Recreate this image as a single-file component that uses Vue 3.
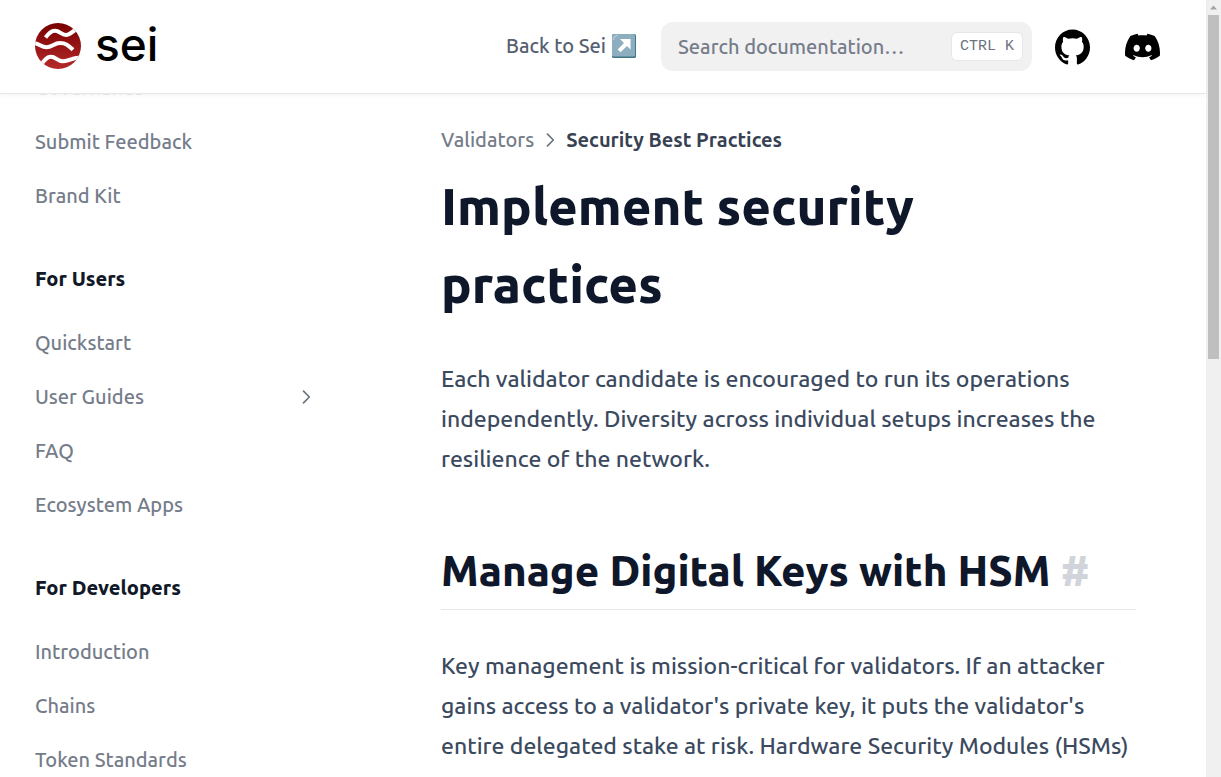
<script setup>
const sections = [
  {
    title: '',
    items: [{ label: 'Governance' }, { label: 'Submit Feedback' }, { label: 'Brand Kit' }],
  },
  {
    title: 'For Users',
    items: [
      { label: 'Quickstart' },
      { label: 'User Guides', expandable: true },
      { label: 'FAQ' },
      { label: 'Ecosystem Apps' },
    ],
  },
  {
    title: 'For Developers',
    items: [{ label: 'Introduction' }, { label: 'Chains' }, { label: 'Token Standards' }],
  },
]
</script>

<template>
  <div class="page">
    <div class="view">
      <header class="navbar">
        <a class="brand" href="#" aria-label="Sei home">
          <svg class="mark" viewBox="0 0 46 46" aria-hidden="true">
            <defs>
              <linearGradient id="seiRed" x1="0" y1="0" x2="0" y2="1">
                <stop offset="0" stop-color="#780000" />
                <stop offset="1" stop-color="#b52a2a" />
              </linearGradient>
              <clipPath id="seiDisc"><circle cx="23" cy="23" r="23" /></clipPath>
            </defs>
            <g clip-path="url(#seiDisc)">
              <rect width="46" height="46" fill="url(#seiRed)" />
              <g fill="none" stroke="#fff" stroke-width="4">
                <path d="M10.500 14.500C14 10 16 7.800 20 7.800C25 7.800 26 12 31 12C35 12 37 9 42 5.500" />
                <path d="M-2 20C4 20 6 24.300 11.500 24.300C17 24.300 19 20 25 20C31 20 33.500 22.500 38 26.800" />
                <path d="M5 43C9 38 11 33.800 16 33.800C21 33.800 22 38.300 28 38.300C33 38.300 35 35 46 34.500" />
              </g>
            </g>
          </svg>
          <span class="wordmark">sei</span>
        </a>
        <a class="back" href="#">
          Back to Sei
          <svg class="arrow-box" viewBox="0 0 24 24" aria-hidden="true">
            <rect width="24" height="24" rx="1.500" fill="#427687" />
            <rect width="23" height="22.500" rx="1.500" fill="#8caebf" />
            <path d="M1.500 6C1.500 3 3 1.500 6 1.500" fill="none" stroke="#b9ced9" stroke-width="1.200" />
            <path d="M8 5H18.500V15.500L15 12L8.500 18.200L5.700 15.400L12 9Z" fill="#fff" />
          </svg>
        </a>
        <div class="search">
          <input type="search" aria-label="Search documentation" placeholder="Search documentation…" />
          <kbd>CTRL K</kbd>
        </div>
        <a class="social" href="#" aria-label="GitHub">
          <svg viewBox="3 3 18 18" aria-hidden="true">
            <path d="M12 3C7.0275 3 3 7.12937 3 12.2276C3 16.3109 5.57625 19.7597 9.15374 20.9824C9.60374 21.0631 9.77249 20.7863 9.77249 20.5441C9.77249 20.3249 9.76125 19.5982 9.76125 18.8254C7.5 19.2522 6.915 18.2602 6.735 17.7412C6.63375 17.4759 6.19499 16.6569 5.8125 16.4378C5.4975 16.2647 5.0475 15.838 5.80124 15.8264C6.51 15.8149 7.01625 16.4954 7.18499 16.7723C7.99499 18.1679 9.28875 17.7758 9.80625 17.5335C9.885 16.9337 10.1212 16.53 10.38 16.2993C8.3775 16.0687 6.285 15.2728 6.285 11.7432C6.285 10.7397 6.63375 9.9092 7.20749 9.26326C7.1175 9.03257 6.8025 8.08674 7.2975 6.81794C7.2975 6.81794 8.05125 6.57571 9.77249 7.76377C10.4925 7.55615 11.2575 7.45234 12.0225 7.45234C12.7875 7.45234 13.5525 7.55615 14.2725 7.76377C15.9937 6.56418 16.7475 6.81794 16.7475 6.81794C17.2424 8.08674 16.9275 9.03257 16.8375 9.26326C17.4113 9.9092 17.76 10.7281 17.76 11.7432C17.76 15.2843 15.6563 16.0687 13.6537 16.2993C13.98 16.5877 14.2613 17.1414 14.2613 18.0065C14.2613 19.2407 14.25 20.2326 14.25 20.5441C14.25 20.7863 14.4188 21.0746 14.8688 20.9824C16.6554 20.364 18.2079 19.1866 19.3078 17.6162C20.4077 16.0457 20.9995 14.1611 21 12.2276C21 7.12937 16.9725 3 12 3Z" />
          </svg>
        </a>
        <a class="social" href="#" aria-label="Discord">
          <svg viewBox="0 5 30.67 23.25" aria-hidden="true">
            <path d="M26.0015 6.9529C24.0021 6.03845 21.8787 5.37198 19.6623 5C19.3833 5.48048 19.0733 6.13144 18.8563 6.64292C16.4989 6.30193 14.1585 6.30193 11.8336 6.64292C11.6166 6.13144 11.2911 5.48048 11.0276 5C8.79575 5.37198 6.67235 6.03845 4.6869 6.9529C0.672601 12.8736 -0.41235 18.6548 0.130124 24.3585C2.79599 26.2959 5.36889 27.4739 7.89682 28.2489C8.51679 27.4119 9.07477 26.5129 9.55525 25.5675C8.64079 25.2265 7.77283 24.808 6.93587 24.312C7.15286 24.1571 7.36986 23.9866 7.57135 23.8161C12.6241 26.1255 18.0969 26.1255 23.0876 23.8161C23.3046 23.9866 23.5061 24.1571 23.7231 24.312C22.8861 24.808 22.0182 25.2265 21.1037 25.5675C21.5842 26.5129 22.1422 27.4119 22.7621 28.2489C25.2885 27.4739 27.8769 26.2959 30.5288 24.3585C31.1952 17.7559 29.4733 12.0212 26.0015 6.9529ZM10.2527 20.8402C8.73376 20.8402 7.49382 19.4608 7.49382 17.7714C7.49382 16.082 8.70276 14.7025 10.2527 14.7025C11.7871 14.7025 13.0425 16.082 13.0115 17.7714C13.0115 19.4608 11.7871 20.8402 10.2527 20.8402ZM20.4373 20.8402C18.9183 20.8402 17.6768 19.4608 17.6768 17.7714C17.6768 16.082 18.8873 14.7025 20.4373 14.7025C21.9717 14.7025 23.2271 16.082 23.1961 17.7714C23.1961 19.4608 21.9872 20.8402 20.4373 20.8402Z" />
          </svg>
        </a>
      </header>

      <div class="body">
        <nav class="sidebar" aria-label="Documentation">
          <section v-for="section in sections" :key="section.title">
            <h2 v-if="section.title">{{ section.title }}</h2>
            <ul>
              <li v-for="item in section.items" :key="item.label">
                <a href="#">
                  {{ item.label }}
                  <svg v-if="item.expandable" class="chevron" viewBox="0 0 24 24" aria-hidden="true">
                    <path d="M9 5l7 7-7 7" />
                  </svg>
                </a>
              </li>
            </ul>
          </section>
        </nav>

        <main>
          <nav class="crumbs" aria-label="Breadcrumb">
            <a href="#">Validators</a>
            <svg class="chevron" viewBox="0 0 24 24" aria-hidden="true"><path d="M9 5l7 7-7 7" /></svg>
            <span class="current">Security Best Practices</span>
          </nav>
          <h1>Implement security practices</h1>
          <p>
            Each validator candidate is encouraged to run its operations independently. Diversity
            across individual setups increases the resilience of the network.
          </p>
          <h2>Manage Digital Keys with HSM <a class="anchor" href="#">#</a></h2>
          <p>
            Key management is mission-critical for validators. If an attacker gains access to a
            validator's private key, it puts the validator's entire delegated stake at risk. Hardware
            Security Modules (HSMs)
          </p>
        </main>
      </div>
    </div>

    <div class="scrollbar" aria-hidden="true">
      <svg viewBox="0 0 15 15"><path d="M4 9.500L7.500 5.500L11 9.500Z" fill="#a3a3a3" /></svg>
      <div class="thumb"></div>
    </div>
  </div>
</template>

<style>
body {
  margin: 0;
  background: #fff;
}
</style>

<style scoped>
.page {
  display: flex;
  height: 100vh;
  overflow: hidden;
  font-family: Ubuntu, "Noto Sans", "Open Sans", sans-serif;
  font-size: 20px;
  font-weight: 500;
  color: #3b4a5f;
}
a {
  color: inherit;
  text-decoration: none;
}
.view {
  flex: 1;
  min-width: 0;
  display: flex;
  flex-direction: column;
}
.navbar {
  position: relative;
  z-index: 1;
  flex: none;
  box-sizing: border-box;
  height: 93px;
  padding: 0 34px 2px 35px;
  display: flex;
  align-items: center;
  background: #fff;
  box-shadow: 0 1px 0 #e8e8e8, 0 3px 5px rgba(0, 0, 0, 0.04);
}
.brand {
  display: flex;
  align-items: center;
  gap: 14px;
  margin-right: auto;
  color: #000;
}
.mark {
  width: 46px;
  height: 46px;
}
.wordmark {
  font: 500 46px/46px Inter, "Liberation Sans", sans-serif;
  padding-bottom: 4px;
}
.back {
  display: flex;
  align-items: center;
  gap: 6px;
  margin-right: 25px;
  color: #566070;
}
.arrow-box {
  width: 24px;
  height: 24px;
}
.search {
  box-sizing: border-box;
  width: 371px;
  height: 49px;
  padding: 0 9px 0 17px;
  margin-top: 2px;
  display: flex;
  align-items: center;
  border-radius: 12px;
  background: #f1f1f1;
}
.search input {
  flex: 1;
  min-width: 0;
  padding: 0;
  border: 0;
  outline: 0;
  background: none;
  font: inherit;
  color: #374151;
}
.search input::placeholder {
  color: #757c8a;
  opacity: 1;
}
kbd {
  box-sizing: border-box;
  height: 29px;
  padding: 0 8px;
  border: 1px solid #e5e7eb;
  border-radius: 6px;
  background: #fff;
  color: #6b7280;
  font: 400 15px/27px "Liberation Mono", monospace;
}
.social {
  display: flex;
  align-items: center;
  margin: 2px 12px 0 23px;
  color: #000;
}
.social svg {
  width: 35px;
  height: 36px;
  fill: currentColor;
}
.body {
  flex: 1;
  min-height: 0;
  display: flex;
  overflow: hidden;
}
.sidebar {
  position: relative;
  box-sizing: border-box;
  flex: none;
  width: 360px;
  padding: 0 35px;
  margin-top: -30px;
  color: #757c8a;
}
.sidebar::after {
  content: "";
  position: absolute;
  top: 30px;
  left: 0;
  width: 100%;
  height: 20px;
  background: linear-gradient(rgba(255, 255, 255, 0.85), rgba(255, 255, 255, 0.7));
}
.sidebar section + section {
  margin-top: 32px;
}
.sidebar ul {
  margin: 0;
  padding: 0;
  list-style: none;
}
.sidebar a {
  display: flex;
  align-items: center;
  justify-content: space-between;
  height: 49px;
  padding-right: 9px;
  margin-bottom: 5px;
}
.sidebar h2 {
  margin: 0 0 12px;
  font-size: 20px;
  line-height: 54px;
  font-weight: 800;
  color: #111827;
}
.chevron {
  width: 20px;
  height: 20px;
  fill: none;
  stroke: #6b7280;
  stroke-width: 2;
  stroke-linecap: round;
  stroke-linejoin: round;
}
main {
  flex: 1;
  min-width: 0;
  padding: 32px 70px 0 81px;
}
.crumbs {
  display: flex;
  align-items: center;
  gap: 6px;
  line-height: 30px;
  color: #757c8a;
}
.crumbs .current {
  color: #374151;
  font-weight: 600;
}
h1 {
  margin: 12px 0 0;
  color: #0f172a;
  font-size: 51px;
  line-height: 78px;
  font-weight: 800;
}
p {
  margin: 36px 0 0;
  font-size: 23px;
  line-height: 40px;
}
main h2 {
  margin: 65px 0 0;
  padding-bottom: 11px;
  border-bottom: 1px solid #e5e7eb;
  color: #0f172a;
  font-size: 42px;
  line-height: 54px;
  font-weight: 800;
}
.anchor {
  color: #d1d5db;
}
.scrollbar {
  flex: none;
  width: 15px;
  background: #f0f0f0;
}
.scrollbar svg {
  display: block;
}
.thumb {
  height: 44.3%;
  margin: 0 2px;
  background: #bfbfbf;
}
</style>
